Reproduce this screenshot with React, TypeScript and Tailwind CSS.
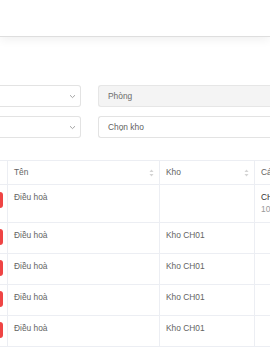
import React from "react";

const Chevron = () => (
  <svg width="7" height="5" viewBox="0 0 7 5" fill="none" className="shrink-0">
    <path d="M1 1.2 L3.5 3.6 L6 1.2" stroke="#9a9a9a" strokeWidth="0.9" />
  </svg>
);

const Sort = () => (
  <svg width="5" height="8" viewBox="0 0 5 8" className="shrink-0">
    <path d="M2.5 0.5 L4.5 3 L0.5 3 Z" fill="#d4d4d4" />
    <path d="M2.5 7.5 L4.5 5 L0.5 5 Z" fill="#d4d4d4" />
  </svg>
);

const Badge = () => (
  <div className="w-[8px] overflow-hidden shrink-0 flex">
    <div className="ml-[-20px] w-[23px] h-[16px] rounded-[3px] bg-[#ef4444]" />
  </div>
);

const rows = [0, 1, 2, 3];

export default function App() {
  return (
    <div
      className="w-[270px] h-[350px] overflow-hidden bg-white text-[8.4px] text-[#636363]"
      style={{ fontFamily: '"Liberation Sans", Arial, sans-serif' }}
    >
      <div className="h-[37px] bg-white border-b border-[#dedede] shadow-[0_2px_10px_rgba(0,0,0,0.07)] relative z-10" />

      <div className="pt-[48px] flex flex-col gap-[9px]">
        <div className="flex gap-[17px] h-[22px]">
          <div className="w-[81px] h-full border border-l-0 border-[#e3e3e3] rounded-r-[3px] flex items-center justify-end pr-[4px]">
            <Chevron />
          </div>
          <div className="flex-1 h-full border border-r-0 border-[#e6e6e6] bg-[#f4f4f4] rounded-l-[3px] flex items-center pl-[9px] text-[#6b6b6b]">
            Phòng
          </div>
        </div>
        <div className="flex gap-[17px] h-[22px]">
          <div className="w-[81px] h-full border border-l-0 border-[#e3e3e3] rounded-r-[3px] flex items-center justify-end pr-[4px]">
            <Chevron />
          </div>
          <div className="flex-1 h-full border border-r-0 border-[#e3e3e3] bg-white rounded-l-[3px] flex items-center pl-[9px] text-[#5f5f5f]">
            Chọn kho
          </div>
        </div>
      </div>

      <div className="mt-[22px] border-t border-[#eceef3]">
        <div className="flex h-[24px] border-b border-[#eceef3]">
          <div className="w-[8px] shrink-0 border-r border-[#eceef3]" />
          <div className="w-[152px] shrink-0 border-r border-[#eceef3] flex items-center pl-[6px] pr-[5px] justify-between">
            <span>Tên</span>
            <Sort />
          </div>
          <div className="w-[95px] shrink-0 border-r border-[#eceef3] flex items-center pl-[6px] pr-[5px] justify-between">
            <span>Kho</span>
            <Sort />
          </div>
          <div className="flex-1 flex items-center pl-[6px] whitespace-nowrap">Cách</div>
        </div>

        <div className="flex h-[38px] border-b border-[#eceef3]">
          <div className="w-[8px] shrink-0 border-r border-[#eceef3] pt-[7px]">
            <Badge />
          </div>
          <div className="w-[152px] shrink-0 border-r border-[#eceef3] pl-[6px] pt-[6px]">
            Điều hoà
          </div>
          <div className="w-[95px] shrink-0 border-r border-[#eceef3]" />
          <div className="flex-1 pl-[6px] pt-[6px] whitespace-nowrap leading-[12px]">
            <div className="text-[#333]">CH01</div>
            <div className="text-[#999]">10</div>
          </div>
        </div>

        {rows.map((r) => (
          <div key={r} className="flex h-[31px] border-b border-[#eceef3]">
            <div className="w-[8px] shrink-0 border-r border-[#eceef3] pt-[6px]">
              <Badge />
            </div>
            <div className="w-[152px] shrink-0 border-r border-[#eceef3] pl-[6px] pt-[6px]">
              Điều hoà
            </div>
            <div className="w-[95px] shrink-0 border-r border-[#eceef3] pl-[6px] pt-[6px]">
              Kho CH01
            </div>
            <div className="flex-1" />
          </div>
        ))}
      </div>
    </div>
  );
}
